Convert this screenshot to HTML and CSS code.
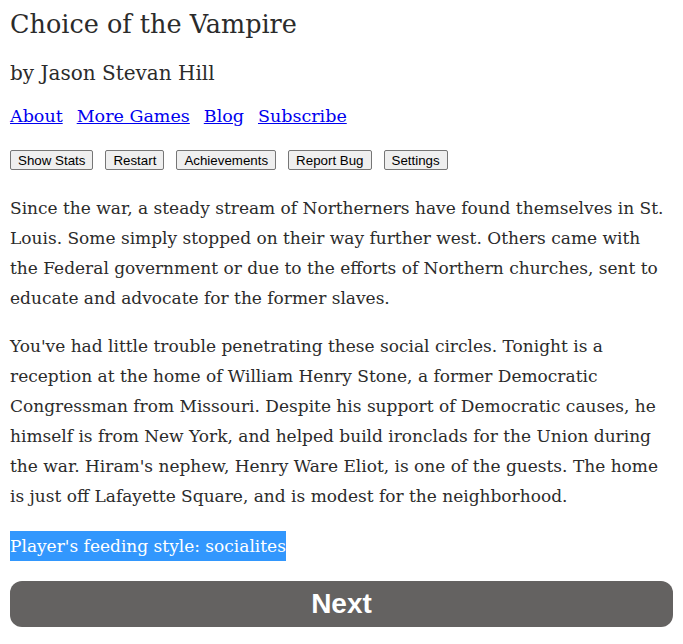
FILE: index.html
```html
<!DOCTYPE html>
<html lang="en">
  <head>
    <title>Choice of the Vampire</title>
    <link rel="stylesheet" href="styles.css">
  </head>
  <body>
    <div class="header">
      <h1 class="game-title">Choice of the Vampire</h1>
      <h2 class="byline">by Jason Stevan Hill</h2>
      <p class="links">
        <a href="#">About</a>
        <a href="#">More Games</a>
        <a href="#">Blog</a>
        <a href="#">Subscribe</a>
      </p>
      <p class="buttons">
        <button type="button">Show Stats</button>
        <button type="button">Restart</button>
        <button type="button">Achievements</button>
        <button type="button">Report Bug</button>
        <button type="button">Settings</button>
      </p>
    </div>
    <div class="story">
      <p>Since the war, a steady stream of Northerners have found themselves in St. Louis. Some simply stopped on their way further west. Others came with the Federal government or due to the efforts of Northern churches, sent to educate and advocate for the former slaves.</p>
      <p>You've had little trouble penetrating these social circles. Tonight is a reception at the home of William Henry Stone, a former Democratic Congressman from Missouri. Despite his support of Democratic causes, he himself is from New York, and helped build ironclads for the Union during the war. Hiram's nephew, Henry Ware Eliot, is one of the guests. The home is just off Lafayette Square, and is modest for the neighborhood.</p>
      <p class="stat-line"><span class="selected">Player's feeding style: socialites</span></p>
    </div>
    <button type="button" class="next">Next</button>
  </body>
</html>
```

FILE: styles.css
```css
body {
  font-family: Georgia, "DejaVu Serif", serif;
  margin: 0;
  padding: 0 10px;
  background-color: #fff;
  color: #2b2b2b;
}

.game-title {
  font-size: 25.5px;
  font-weight: normal;
  margin: 0;
  padding-top: 6px;
  line-height: 36px;
}

.byline {
  font-size: 20px;
  font-weight: normal;
  margin: 17px 0 0;
  line-height: 28px;
}

.links {
  font-size: 17.5px;
  margin: 15px 0 0;
  line-height: 28px;
  display: flex;
  gap: 14px;
}

.links a {
  color: #0000ee;
}

.buttons {
  margin: 20px 0 0;
  display: flex;
  gap: 12px;
}

.buttons button {
  font-family: "Liberation Sans", Arial, sans-serif;
  font-size: 13.33px;
  padding: 1px 7px;
  background-color: #efefef;
  border: 1px solid #767676;
  border-radius: 2px;
  color: #000;
  height: 20px;
}

.story p {
  font-size: 17px;
  line-height: 30px;
  margin: 23px 0 0;
}

.story p + p {
  margin-top: 18px;
}

.story p.stat-line {
  margin-top: 20px;
}

.selected {
  background-color: #3297fd;
  color: #fff;
  padding: 5px 0;
}

.next {
  display: block;
  width: 100%;
  margin-top: 20px;
  height: 46px;
  background-color: #646261;
  color: #fff;
  border: none;
  border-radius: 12px;
  font-family: "Liberation Sans", Arial, sans-serif;
  font-weight: bold;
  font-size: 28px;
  cursor: pointer;
}
```
